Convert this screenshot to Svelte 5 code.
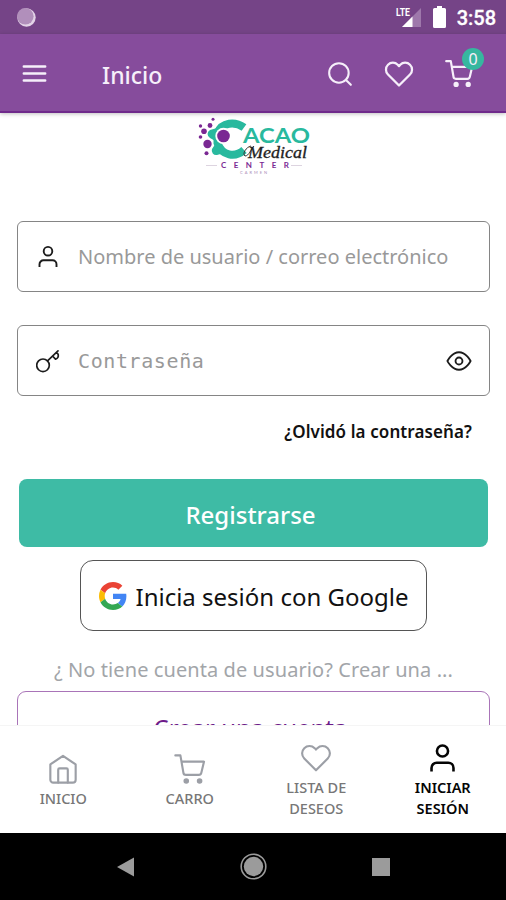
<script lang="ts">
  let username = $state('');
  let password = $state('');
  let showPassword = $state(false);
  let cartCount = $state(0);
  let active = $state('login');

  const tabs = [
    { id: 'home', icon: 'home', lines: ['INICIO'] },
    { id: 'cart', icon: 'cart', lines: ['CARRO'] },
    { id: 'wishlist', icon: 'heart', lines: ['LISTA DE', 'DESEOS'] },
    { id: 'login', icon: 'user', lines: ['INICIAR', 'SESIÓN'] },
  ];
</script>

{#snippet icon(name: string, size: number, stroke = 1.5)}
  <svg
    width={size}
    height={size}
    viewBox="0 0 24 24"
    fill="none"
    stroke="currentColor"
    stroke-width={stroke}
    stroke-linecap="round"
    stroke-linejoin="round"
  >
    {#if name === 'home'}
      <path d="M2.500 8.600 12 2.200l9.500 6.400V20a2.200 2.200 0 0 1-2.200 2.200H4.700A2.200 2.200 0 0 1 2.500 20z" />
      <path d="M8.400 22.200v-9.700a1 1 0 0 1 1-1h5.200a1 1 0 0 1 1 1v9.700" />
    {:else if name === 'cart'}
      <path d="M1 1.800h3.800L7 14.500a2 2 0 0 0 2 1.900h9.500a2 2 0 0 0 2-1.600L22.500 6.500H5.700" />
      <circle cx="9.200" cy="21" r="1.300" fill="currentColor" />
      <circle cx="19.200" cy="21" r="1.300" fill="currentColor" />
    {:else if name === 'heart'}
      <path d="M20.800 4.600a5.500 5.500 0 0 0-7.800 0L12 5.700l-1-1.100a5.500 5.500 0 0 0-7.800 7.800L12 21.200l8.800-8.800a5.500 5.500 0 0 0 0-7.800z" />
    {:else if name === 'user'}
      <circle cx="12" cy="6.200" r="4.300" />
      <path d="M3.500 22v-2.700a4 4 0 0 1 4-4h9a4 4 0 0 1 4 4V22" stroke-linecap="butt" />
    {:else if name === 'search'}
      <circle cx="11" cy="11" r="9" />
      <path d="m17.500 17.500 4.500 4.500" />
    {:else if name === 'menu'}
      <path d="M2.500 5.700h19M2.500 12h19M2.500 18.300h19" />
    {:else if name === 'key'}
      <circle cx="7" cy="16.300" r="6.300" />
      <path d="M11.500 11.800 22 1.800M16.500 7l3 3.200q3.400-1.200 2.700-4.700l-1.500-2.200" />
    {:else if name === 'eye'}
      <path d="M1.300 12S5.300 3.900 12 3.900 22.700 12 22.700 12 18.700 20.100 12 20.100 1.300 12 1.300 12z" />
      <circle cx="12" cy="12" r="3.200" />
    {/if}
  </svg>
{/snippet}

<div class="screen">
  <div class="status-bar">
    <svg width="20" height="20" viewBox="0 0 20 20">
      <circle cx="10.500" cy="10.500" r="9.200" fill="#e3d3e7" />
      <circle cx="9.300" cy="9.300" r="8.300" fill="#b18fbb" />
    </svg>
    <div class="status-right">
      <svg width="27" height="22" viewBox="0 0 27 22">
        <path d="M26 2v19H7z" fill="#9e78ab" />
        <path d="M17.500 10.500V21H7z" fill="#fff" />
        <text x="1" y="10" textLength="14" lengthAdjust="spacingAndGlyphs" class="lte">LTE</text>
      </svg>
      <svg width="13" height="22" viewBox="0 0 13 22">
        <path d="M4 0h5v2h2.500a1.500 1.500 0 0 1 1.500 1.500v17a1.500 1.500 0 0 1-1.500 1.500h-10A1.500 1.500 0 0 1 0 20.500v-17A1.500 1.500 0 0 1 1.500 2H4z" fill="#fff" />
      </svg>
      <span class="clock">3:58</span>
    </div>
  </div>

  <header class="app-bar">
    <button class="icon-button" aria-label="Menú">{@render icon('menu', 27, 2.2)}</button>
    <h1>Inicio</h1>
    <div class="actions">
      <button class="icon-button" aria-label="Buscar">{@render icon('search', 26, 1.9)}</button>
      <button class="icon-button" aria-label="Favoritos">{@render icon('heart', 30, 1.8)}</button>
      <button class="icon-button cart" aria-label="Carro">
        {@render icon('cart', 29, 1.8)}
        <span class="badge">{cartCount}</span>
      </button>
    </div>
  </header>

  <main>
    <svg class="logo" width="120" height="58" viewBox="0 0 120 58">
      <path d="M49 10.500C40 4 27 5 22.500 16v10C27 39 40 41 49 33" fill="none" stroke="#29b99e" stroke-width="8" />
      <path d="M22 11l-7 2a4.500 4.500 0 0 0 0 8l7 4zM21 26l-4 6a4.500 4.500 0 0 0 5 6l7-2z" fill="#29b99e" />
      <circle cx="28.500" cy="19" r="8.200" fill="#fff" />
      <circle cx="28.500" cy="19" r="6.300" fill="#7a2893" />
      <g fill="#7a2893">
        <circle cx="18" cy="2.200" r="1.500" />
        <circle cx="5.500" cy="9" r="1.700" />
        <circle cx="15" cy="8.500" r="2.400" />
        <circle cx="9" cy="14.300" r="2.800" />
        <circle cx="5.500" cy="20" r="1.800" />
        <circle cx="12.500" cy="27" r="4.200" />
        <circle cx="11.500" cy="36.300" r="2" />
      </g>
      <text x="48" y="25.500" textLength="67" lengthAdjust="spacingAndGlyphs" class="brand">ACAO</text>
      <path d="M56 29c-5 1-9 8-6 10 4 0 6-7 9-10" fill="none" stroke="#333" stroke-width="1" />
      <text x="53" y="41" textLength="59" lengthAdjust="spacingAndGlyphs" class="script">Medical</text>
      <path d="M11 48.500h11M96 48.500h11" stroke="#ddd4e0" stroke-width="1" />
      <text x="26" y="51" textLength="68" class="center">CENTER</text>
      <text x="45" y="57" textLength="27" class="tagline">CARMEN</text>
    </svg>

    <form onsubmit={(e) => e.preventDefault()}>
      <label class="field">
        {@render icon('user', 24, 1.9)}
        <input type="text" placeholder="Nombre de usuario / correo electrónico" bind:value={username} />
      </label>
      <label class="field password">
        {@render icon('key', 24, 1.7)}
        <input type={showPassword ? 'text' : 'password'} placeholder="Contraseña" bind:value={password} />
        <button type="button" class="icon-button" aria-label="Ver" onclick={() => (showPassword = !showPassword)}>
          {@render icon('eye', 26, 1.7)}
        </button>
      </label>
      <a class="forgot" href="#forgot">¿Olvidó la contraseña?</a>
      <button class="submit">Registrarse</button>
    </form>

    <button class="google">
      <svg width="28" height="28" viewBox="0 0 48 48">
        <path fill="#ea4335" d="M24 9.500c3.540 0 6.710 1.220 9.210 3.600l6.850-6.850C35.900 2.380 30.470 0 24 0 14.620 0 6.510 5.380 2.560 13.220l7.980 6.190C12.430 13.720 17.740 9.500 24 9.500z" />
        <path fill="#4285f4" d="M46.980 24.550c0-1.570-.15-3.090-.38-4.550H24v9.020h12.940c-.58 2.960-2.260 5.480-4.780 7.180l7.730 6c4.510-4.180 7.090-10.360 7.090-17.650z" />
        <path fill="#fbbc05" d="M10.530 28.590A14.500 14.500 0 0 1 9.770 24c0-1.600.28-3.140.76-4.590l-7.980-6.190A24 24 0 0 0 0 24c0 3.880.92 7.540 2.560 10.780z" />
        <path fill="#34a853" d="M24 48c6.480 0 11.930-2.130 15.890-5.810l-7.730-6c-2.150 1.450-4.920 2.300-8.160 2.300-6.260 0-11.570-4.220-13.470-9.910l-7.980 6.190C6.510 42.620 14.620 48 24 48z" />
      </svg>
      <span>Inicia sesión con Google</span>
    </button>

    <p class="hint">¿ No tiene cuenta de usuario? Crear una ...</p>
    <button class="create">Crear una cuenta</button>
  </main>

  <nav class="tabs">
    {#each tabs as tab (tab.id)}
      <button class="tab" class:active={active === tab.id} onclick={() => (active = tab.id)}>
        {@render icon(tab.icon, tab.id === 'login' ? 31 : 32, tab.id === 'login' ? 2 : 1.6)}
        {#each tab.lines as line}
          <span>{line}</span>
        {/each}
      </button>
    {/each}
  </nav>

  <div class="system-nav">
    <svg width="18" height="20" viewBox="0 0 18 20"><path d="M17 .5v19L0 10z" fill="#9b9b9b" /></svg>
    <svg width="27" height="27" viewBox="0 0 27 27">
      <circle cx="13.500" cy="13.500" r="12.300" fill="none" stroke="#9b9b9b" stroke-width="1.600" />
      <circle cx="13.500" cy="13.500" r="9.700" fill="#9b9b9b" />
    </svg>
    <svg width="18" height="18" viewBox="0 0 18 18"><path d="M0 0h18v18H0z" fill="#9b9b9b" /></svg>
  </div>
</div>

<style>
  :global(body) {
    margin: 0;
    background: #fff;
  }

  .screen {
    display: flex;
    flex-direction: column;
    width: 506px;
    height: 900px;
    overflow: hidden;
    background: #fff;
    font-family: 'Noto Sans', 'Open Sans', sans-serif;
  }

  svg {
    display: block;
    flex: none;
  }

  button {
    padding: 0;
    border: none;
    background: none;
    font: inherit;
    color: inherit;
    box-sizing: border-box;
  }

  .status-bar {
    flex: none;
    display: flex;
    align-items: center;
    justify-content: space-between;
    height: 34px;
    box-sizing: border-box;
    padding: 0 10px 0 16px;
    background: #754487;
  }

  .status-right {
    display: flex;
    align-items: center;
    color: #fff;
  }

  .status-right svg + svg {
    margin-left: 11px;
  }

  .lte {
    font: 700 10px Roboto, sans-serif;
    fill: #fff;
  }

  .clock {
    margin-left: 11px;
    padding-top: 2px;
    font: 500 20px/34px Roboto, sans-serif;
    -webkit-text-stroke: 0.3px #fff;
  }

  .app-bar {
    flex: none;
    display: flex;
    align-items: center;
    height: 79px;
    box-sizing: border-box;
    padding: 2px 32px 0 21px;
    background: #864c9c;
    border-bottom: 2px solid #6f2a8b;
    box-shadow: 0 1px 4px rgba(0, 0, 0, 0.25);
    color: #f6effa;
    z-index: 1;
  }

  h1 {
    margin: 2px 0 0 54px;
    font-size: 23px;
    font-weight: 500;
    line-height: 34px;
  }

  .actions {
    display: flex;
    align-items: center;
    gap: 31px;
    margin-left: auto;
  }

  .cart {
    position: relative;
  }

  .badge {
    position: absolute;
    top: -11px;
    right: -10px;
    width: 22px;
    height: 22px;
    border-radius: 50%;
    background: #36b79f;
    font-size: 16px;
    line-height: 23px;
    text-align: center;
  }

  main {
    flex: 1;
    min-height: 0;
    overflow: hidden;
    display: flex;
    flex-direction: column;
    align-items: center;
    padding: 4px 16px 0 17px;
  }

  .logo {
    margin-left: 3px;
  }

  .brand {
    font: 700 20px Lato, sans-serif;
    fill: #29b99e;
  }

  .script {
    font: italic 16px 'Liberation Serif', serif;
    fill: #222;
    stroke: #222;
    stroke-width: 0.3px;
  }

  .center {
    font: 700 8px Lato, sans-serif;
    fill: #7a2893;
  }

  .tagline {
    font: 4px Lato, sans-serif;
    fill: #a98bb5;
  }

  form {
    display: flex;
    flex-direction: column;
    width: 100%;
    margin-top: 46px;
  }

  .field {
    display: flex;
    align-items: center;
    height: 71px;
    box-sizing: border-box;
    padding: 0 17px 0 18px;
    border: 1px solid #858585;
    border-radius: 6px;
    color: #1c1c1c;
  }

  .field + .field {
    margin-top: 33px;
  }

  input {
    flex: 1;
    min-width: 0;
    margin-left: 18px;
    padding: 0;
    border: none;
    outline: none;
    background: none;
    font: 20px 'Noto Sans', sans-serif;
  }

  .password input {
    font: 20px 'DejaVu Sans Mono', monospace;
    letter-spacing: 0.6px;
  }

  input::placeholder {
    color: #999;
    opacity: 1;
  }

  .forgot {
    align-self: flex-end;
    margin: 23px 18px 0 0;
    font-size: 17px;
    font-weight: 600;
    line-height: 26px;
    letter-spacing: 0.1px;
    color: #111;
    text-decoration: none;
  }

  .submit {
    height: 68px;
    margin: 34px 2px 0;
    padding: 2px 6px 0 0;
    border-radius: 8px;
    background: #3ebba5;
    color: #fff;
    font-size: 24px;
    font-weight: 500;
  }

  .google {
    flex: none;
    display: flex;
    align-items: center;
    justify-content: center;
    gap: 9px;
    width: 347px;
    height: 71px;
    margin-top: 13px;
    border: 1px solid #555;
    border-radius: 13px;
    color: #111;
    font-size: 24px;
    white-space: nowrap;
  }

  .google span {
    padding-top: 2px;
  }

  .hint {
    margin: 25px 0 0;
    font-size: 20px;
    line-height: 28px;
    letter-spacing: 0.08px;
    color: #a2a5a9;
    white-space: nowrap;
  }

  .create {
    flex: none;
    width: 100%;
    height: 71px;
    margin-top: 7px;
    padding: 2px 6px 0 0;
    border: 1px solid #a974b8;
    border-radius: 9px;
    color: #6d1b89;
    font-size: 24px;
  }

  .tabs {
    flex: none;
    display: grid;
    grid-template-columns: repeat(4, 1fr);
    height: 108px;
    box-sizing: border-box;
    padding-top: 2px;
    border-top: 1px solid #f5f5f5;
    background: #fff;
  }

  .tab {
    display: flex;
    flex-direction: column;
    align-items: center;
    justify-content: center;
    color: #9c9fa6;
  }

  .tab svg {
    margin-bottom: 3px;
  }

  .tab span {
    font-size: 14.5px;
    font-weight: 500;
    line-height: 21px;
    color: #777;
  }

  .tab.active,
  .tab.active span {
    color: #050505;
    font-weight: 600;
  }

  .system-nav {
    flex: none;
    display: flex;
    align-items: center;
    justify-content: center;
    gap: 105px;
    height: 67px;
    background: #000;
  }
</style>
